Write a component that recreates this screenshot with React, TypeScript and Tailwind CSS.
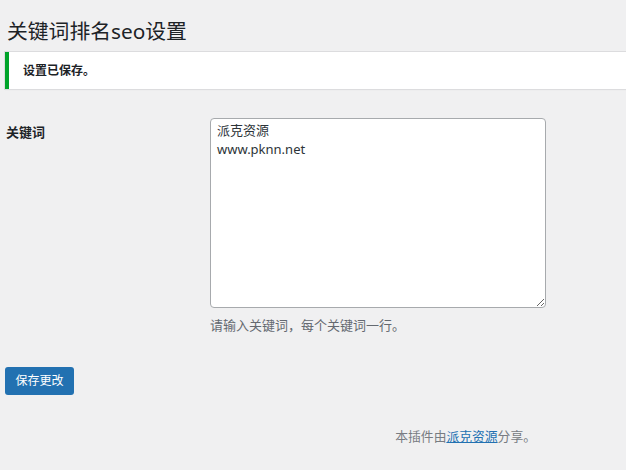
import React from "react";

const font = { fontFamily: '"Noto Sans", "Noto Sans CJK SC", sans-serif' };

export default function App() {
  return (
    <div className="min-h-[470px] w-[626px] overflow-hidden bg-[#f0f0f1] text-[#1d2327]" style={font}>
      <div className="pl-[5px]">
        <h1 className="pt-[17px] pl-[2px] text-[20.8px] leading-[28px] font-normal">关键词排名seo设置</h1>
        <div className="mt-[7px] flex h-[37px] items-center border-l-4 border-[#00a32a] bg-white shadow-[0_1px_1px_rgba(0,0,0,0.08)] outline outline-1 outline-[#dcdcde] pl-[14px]">
          <p className="text-[12px] font-semibold">设置已保存。</p>
        </div>
        <div className="mt-[29px] flex">
          <div className="w-[205px] pt-[4px] pl-[1px] text-[13px] font-semibold leading-[20px]">关键词</div>
          <div className="flex flex-col">
            <textarea
              className="h-[190px] w-[336px] resize-y rounded-[4px] border border-[#a7aaad] bg-white px-[6px] py-[2px] text-[13px] leading-[19px] text-[#2c3338] outline-none"
              style={font}
              defaultValue={"派克资源\nwww.pknn.net"}
            />
            <p className="mt-[8px] text-[13px] leading-[18px] text-[#646970]">请输入关键词，每个关键词一行。</p>
          </div>
        </div>
        <button className="mt-[33px] h-[28px] w-[69px] rounded-[3px] bg-[#2271b1] text-[12px] text-white">保存更改</button>
      </div>
      <div className="mt-[32px] flex justify-end pr-[90px] text-[12.8px] text-[#787c82]">
        <span>
          本插件由<a className="text-[#2271b1] underline">派克资源</a>分享。
        </span>
      </div>
    </div>
  );
}
